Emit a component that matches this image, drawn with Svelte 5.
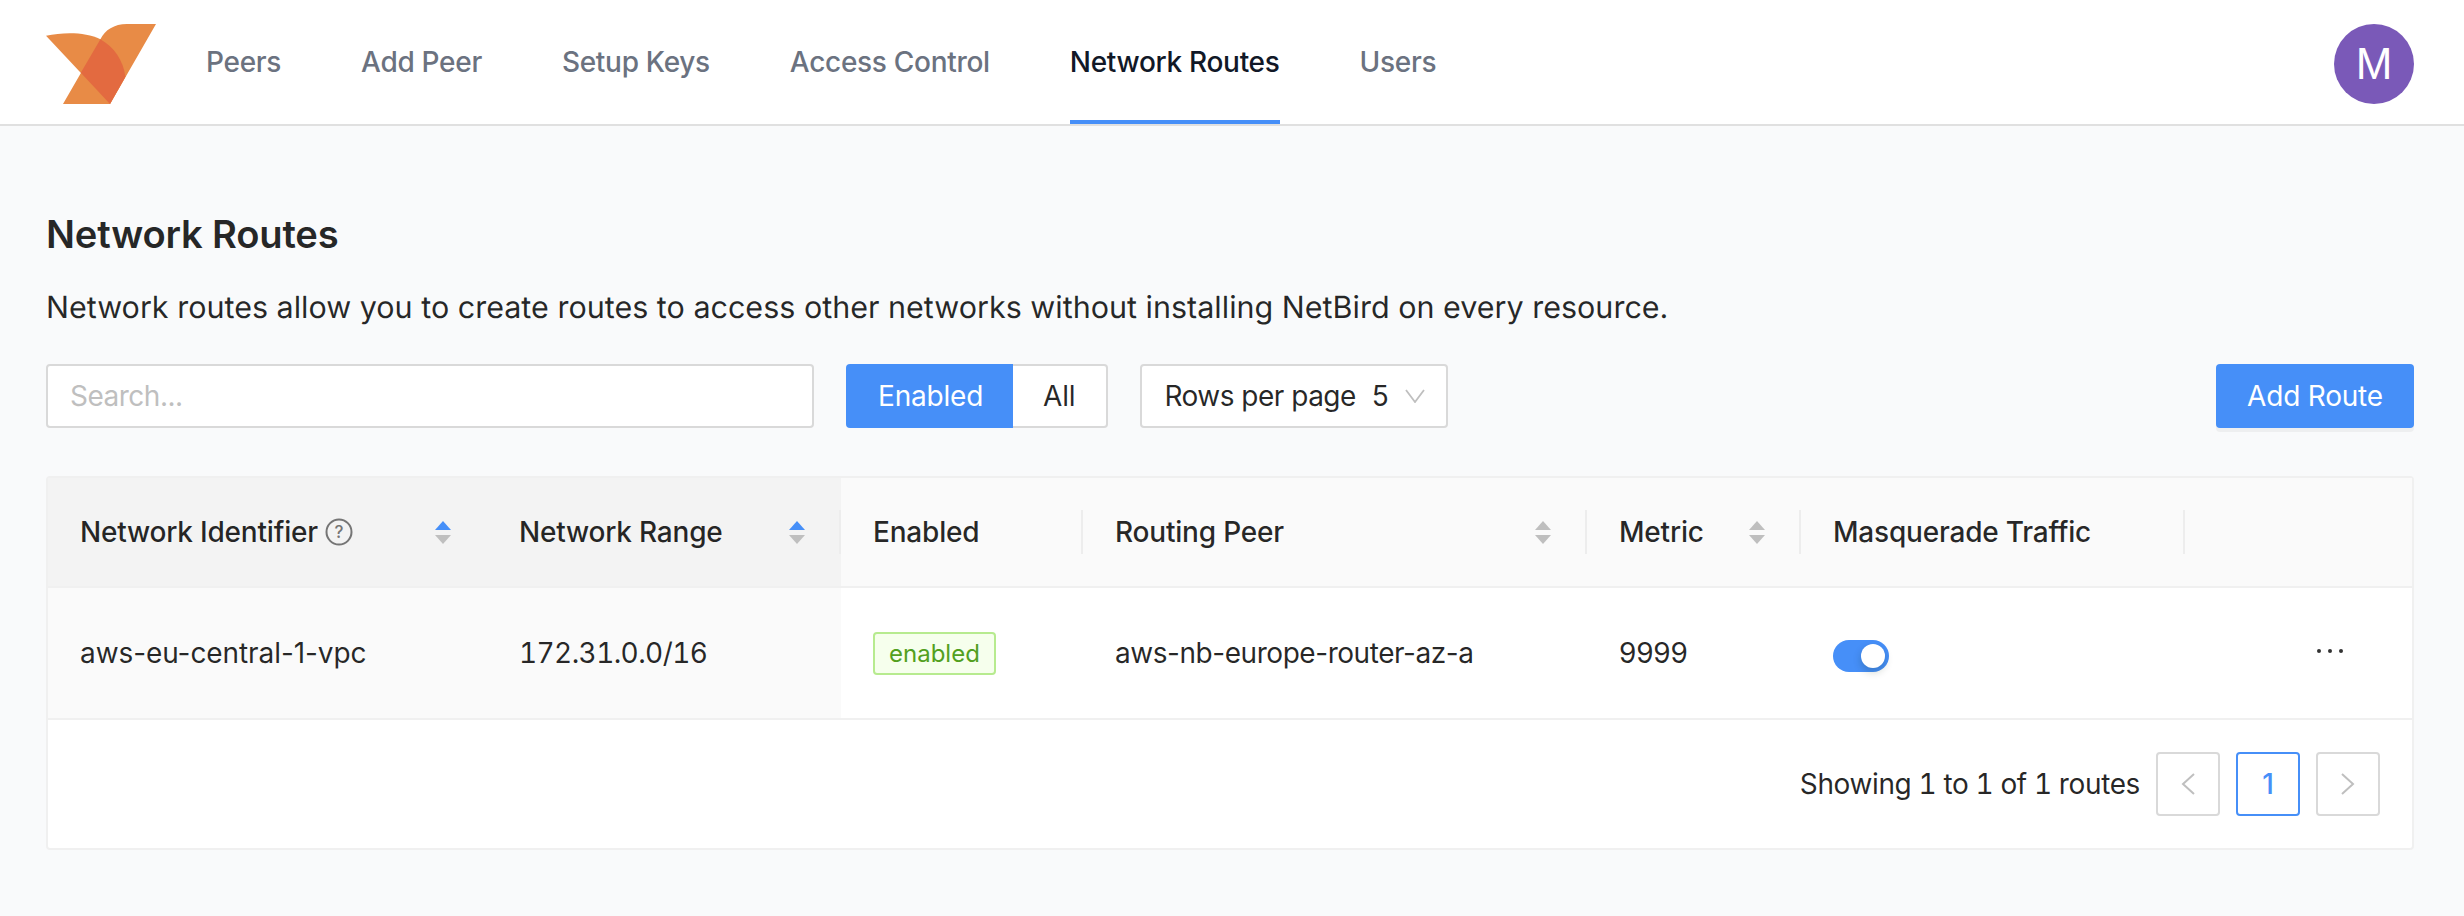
<script>
  const navItems = ["Peers", "Add Peer", "Setup Keys", "Access Control", "Network Routes", "Users"];
  const activeNav = "Network Routes";

  const columns = [
    { label: "Network Identifier", help: true, sort: "asc" },
    { label: "Network Range", sort: "asc" },
    { label: "Enabled", divider: true },
    { label: "Routing Peer", sort: "none", divider: true },
    { label: "Metric", sort: "none", divider: true },
    { label: "Masquerade Traffic", divider: true },
    { label: "", divider: true },
  ];

  let filter = $state("Enabled");
  let masquerade = $state(true);
</script>

<header class="topbar">
  <svg class="logo" width="110" height="80" viewBox="0 0 110 80">
    <path d="M110 0 L64 80 L17 80 L54.4 15.3 C59 6 68 0 81 0 Z" fill="#e88b46" />
    <path d="M0 11.7 C18 8 40 8 54.4 15.3 C68 23 77 36 79.4 52.7 L64 80 Z" fill="#e88b46" />
    <path d="M54.4 15.3 C68 23 77 36 79.4 52.7 L64 80 L34.8 48.7 Z" fill="#e36a40" />
  </svg>
  <nav>
    {#each navItems as item}
      <a href="#top" class:active={item === activeNav}>{item}</a>
    {/each}
  </nav>
  <div class="avatar">M</div>
</header>

<main>
  <h1>Network Routes</h1>
  <p class="intro">Network routes allow you to create routes to access other networks without installing NetBird on every resource.</p>

  <div class="toolbar">
    <input class="search" type="text" placeholder="Search..." />
    <div class="segmented">
      {#each ["Enabled", "All"] as option}
        <button class:on={filter === option} onclick={() => (filter = option)}>{option}</button>
      {/each}
    </div>
    <div class="rows-select">
      <span class="rows-label">Rows per page</span>
      <span class="rows-value">5</span>
      <svg width="20" height="14" viewBox="0 0 20 14"><path d="M1 1 L10 13 L19 1" fill="none" stroke="#bfbfbf" stroke-width="1.8" /></svg>
    </div>
    <button class="primary">Add Route</button>
  </div>

  <div class="table-card">
    <table>
      <colgroup>
        <col style="width: 439px" />
        <col style="width: 354px" />
        <col style="width: 242px" />
        <col style="width: 504px" />
        <col style="width: 214px" />
        <col style="width: 384px" />
        <col />
      </colgroup>
      <thead>
        <tr>
          {#each columns as col, i}
            <th class:sorted={i < 2}>
              {#if col.divider}<span class="divider"></span>{/if}
              <div class="th-inner">
                <span class="th-label">
                  {col.label}
                  {#if col.help}
                    <svg class="help" width="28" height="28" viewBox="0 0 28 28">
                      <circle cx="14" cy="14" r="12.5" fill="none" stroke="#757575" stroke-width="2" />
                      <text x="14" y="20" text-anchor="middle" font-size="17" fill="#757575" font-family="Inter">?</text>
                    </svg>
                  {/if}
                </span>
                {#if col.sort}
                  <span class="sorter">
                    <i class="up" class:lit={col.sort === "asc"}></i>
                    <i class="down"></i>
                  </span>
                {/if}
              </div>
            </th>
          {/each}
        </tr>
      </thead>
      <tbody>
        <tr>
          <td class="sorted identifier">aws-eu-central-1-vpc</td>
          <td class="sorted range">172.31.0.0/16</td>
          <td><span class="tag">enabled</span></td>
          <td class="peer">aws-nb-europe-router-az-a</td>
          <td>9999</td>
          <td>
            <button class="switch" class:on={masquerade} aria-label="Masquerade Traffic" onclick={() => (masquerade = !masquerade)}>
              <span class="knob"></span>
            </button>
          </td>
          <td class="more">
            <svg width="28" height="6" viewBox="0 0 28 6">
              <circle cx="3" cy="3" r="2" fill="#333" />
              <circle cx="14" cy="3" r="2" fill="#333" />
              <circle cx="25" cy="3" r="2" fill="#333" />
            </svg>
          </td>
        </tr>
      </tbody>
    </table>
    <div class="pagination">
      <span class="total">Showing 1 to 1 of 1 routes</span>
      <button class="page" aria-label="Previous page">
        <svg width="14" height="22" viewBox="0 0 14 22"><path d="M13 1 L2 11 L13 21" fill="none" stroke="#bfbfbf" stroke-width="2" /></svg>
      </button>
      <button class="page current">1</button>
      <button class="page" aria-label="Next page">
        <svg width="14" height="22" viewBox="0 0 14 22"><path d="M1 1 L12 11 L1 21" fill="none" stroke="#bfbfbf" stroke-width="2" /></svg>
      </button>
    </div>
  </div>
</main>

<style>
  :global(body) {
    background: #f9fafb;
    font-family: Inter, "Noto Sans", sans-serif;
    color: rgba(0, 0, 0, 0.85);
    font-size: 28px;
    letter-spacing: -0.2px;
  }

  .topbar {
    display: flex;
    align-items: center;
    box-sizing: border-box;
    height: 126px;
    padding: 4px 50px 0 46px;
    background: white;
    border-bottom: 2px solid #e0e0e0;
  }

  .logo {
    flex: none;
    margin-right: 50px;
  }

  nav {
    display: flex;
    gap: 80px;
    height: 100%;
  }

  nav a {
    display: flex;
    align-items: center;
    color: #6b7280;
    font-weight: 500;
    letter-spacing: -0.3px;
    text-decoration: none;
    border-bottom: 4px solid transparent;
  }

  nav a.active {
    color: #111827;
    border-bottom-color: #468ff8;
  }

  .avatar {
    margin-left: auto;
    width: 80px;
    height: 80px;
    border-radius: 50%;
    background: #7a59b8;
    color: white;
    display: flex;
    align-items: center;
    justify-content: center;
    font-size: 44px;
    font-family: "Liberation Sans", sans-serif;
  }

  main {
    padding: 84px 50px 64px 46px;
  }

  h1 {
    margin: 0;
    font-size: 38.2px;
    line-height: 48px;
    font-weight: 600;
  }

  .intro {
    margin: 28px 0 0;
    line-height: 44px;
    font-size: 30.5px;
    letter-spacing: 0;
    text-rendering: geometricPrecision;
  }

  .toolbar {
    display: flex;
    margin-top: 34px;
    height: 64px;
  }

  .search {
    width: 768px;
    box-sizing: border-box;
    padding: 0 22px;
    border: 2px solid #d9d9d9;
    border-radius: 4px;
    background: white;
    font: inherit;
    letter-spacing: -0.5px;
    outline: none;
  }

  .search::placeholder {
    color: #bfbfbf;
  }

  .segmented {
    display: flex;
    margin-left: 32px;
  }

  .segmented button {
    font: inherit;
    letter-spacing: inherit;
    background: white;
    color: rgba(0, 0, 0, 0.85);
    border: 2px solid #d9d9d9;
    padding: 0 30px;
    cursor: pointer;
  }

  .segmented button:first-child {
    border-radius: 4px 0 0 4px;
    border-right: none;
  }

  .segmented button:last-child {
    border-radius: 0 4px 4px 0;
    border-left: none;
    padding-right: 31px;
  }

  .segmented button.on {
    background: #468ff8;
    border-color: #468ff8;
    color: white;
  }

  .rows-select {
    display: flex;
    align-items: center;
    margin-left: 32px;
    padding: 0 21px 0 22px;
    border: 2px solid #d9d9d9;
    border-radius: 4px;
    background: white;
    box-sizing: border-box;
  }

  .rows-label {
    letter-spacing: -0.5px;
  }

  .rows-value {
    margin: 0 16px;
  }

  .primary {
    margin-left: auto;
    width: 198px;
    font: inherit;
    letter-spacing: inherit;
    color: white;
    background: #468ff8;
    border: none;
    border-radius: 4px;
    box-shadow: 0 4px 0 rgba(0, 0, 0, 0.045);
    cursor: pointer;
  }

  .table-card {
    margin-top: 48px;
    background: white;
    border: 2px solid #f0f0f0;
    border-radius: 4px;
  }

  table {
    width: 100%;
    border-collapse: collapse;
    table-layout: fixed;
  }

  th {
    position: relative;
    height: 108px;
    padding: 0 32px;
    background: #fafafa;
    border-bottom: 2px solid #f0f0f0;
    text-align: left;
    font-weight: 500;
  }

  th.sorted {
    background: #f3f3f3;
  }

  .divider {
    position: absolute;
    left: -2px;
    top: 32px;
    bottom: 32px;
    width: 2px;
    background: #ededed;
  }

  .th-inner {
    display: flex;
    align-items: center;
    justify-content: space-between;
  }

  .th-label {
    display: inline-flex;
    align-items: center;
    gap: 7px;
  }

  .sorter {
    display: flex;
    flex-direction: column;
    gap: 5px;
    margin-right: 4px;
  }

  .sorter i {
    display: block;
    width: 0;
    height: 0;
    border-left: 8px solid transparent;
    border-right: 8px solid transparent;
  }

  .sorter .up {
    border-bottom: 9px solid #bfbfbf;
  }

  .sorter .up.lit {
    border-bottom-color: #468ff8;
  }

  .sorter .down {
    border-top: 9px solid #bfbfbf;
  }

  td {
    height: 130px;
    padding: 0 32px;
    border-bottom: 2px solid #f0f0f0;
  }

  td.sorted {
    background: #fafafa;
  }

  td.identifier {
    letter-spacing: -0.08px;
  }

  td.range {
    font-variant-numeric: tabular-nums;
    letter-spacing: -0.6px;
  }

  td.peer {
    letter-spacing: -0.45px;
  }

  .tag {
    display: inline-block;
    padding: 0 14px;
    font-size: 24px;
    line-height: 39px;
    letter-spacing: 0;
    color: #52a01e;
    background: #f6ffed;
    border: 2px solid #b7eb8f;
    border-radius: 4px;
  }

  .switch {
    display: block;
    position: relative;
    top: 3px;
    width: 56px;
    height: 32px;
    padding: 0;
    border: none;
    border-radius: 16px;
    background: #bfbfbf;
    cursor: pointer;
  }

  .switch.on {
    background: #468ff8;
  }

  .knob {
    position: absolute;
    top: 4px;
    left: 4px;
    width: 24px;
    height: 24px;
    border-radius: 50%;
    background: white;
    box-shadow: 0 4px 8px rgba(0, 35, 11, 0.2);
  }

  .switch.on .knob {
    left: 28px;
  }

  .more {
    text-align: right;
    padding-right: 68px;
  }

  .more svg {
    display: block;
    margin-left: auto;
    position: relative;
    top: -2px;
  }

  .pagination {
    display: flex;
    align-items: center;
    justify-content: flex-end;
    gap: 16px;
    height: 128px;
    padding-right: 32px;
  }

  .total {
    font-variant-numeric: tabular-nums;
    letter-spacing: -0.38px;
  }

  .page {
    width: 64px;
    height: 64px;
    padding: 0;
    display: flex;
    align-items: center;
    justify-content: center;
    background: white;
    border: 2px solid #d9d9d9;
    border-radius: 4px;
    font: inherit;
    font-weight: 500;
    cursor: pointer;
  }

  .page.current {
    color: #468ff8;
    border-color: #468ff8;
  }
</style>
